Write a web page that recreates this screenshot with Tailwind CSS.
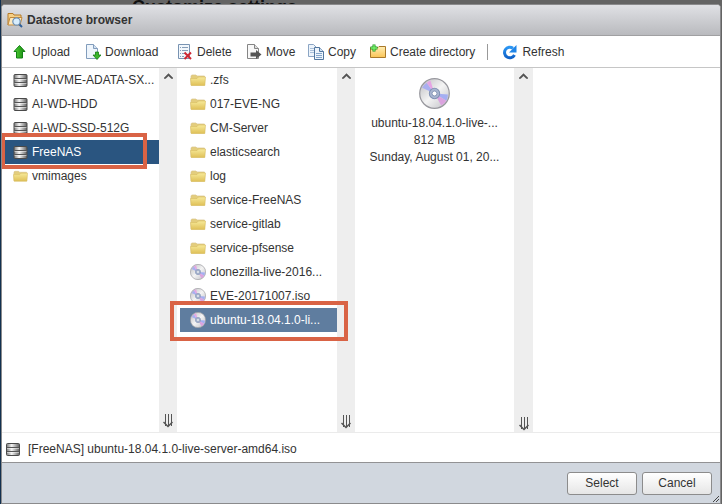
<!DOCTYPE html>
<html lang="en">
<head>
<meta charset="utf-8">
<title>Datastore browser</title>
<script src="https://cdn.jsdelivr.net/npm/@tailwindcss/browser@4"></script>
</head>
<body class="h-screen overflow-hidden bg-[#646464] font-['Liberation_Sans',Arial,sans-serif] text-[12px] leading-4 text-[#333]">
<svg class="absolute size-0" aria-hidden="true">
  <defs>
    <linearGradient id="metal"><stop offset="0" stop-color="#777"/><stop offset=".4" stop-color="#f4f4f4"/><stop offset="1" stop-color="#606060"/></linearGradient>
    <linearGradient id="yellow" x2="0" y2="1"><stop offset="0" stop-color="#f7ea9a"/><stop offset="1" stop-color="#dfc057"/></linearGradient>
    <linearGradient id="amber" x2="0" y2="1"><stop offset="0" stop-color="#ffeeb5"/><stop offset="1" stop-color="#fac456"/></linearGradient>
    <linearGradient id="green"><stop offset="0" stop-color="#55d63c"/><stop offset="1" stop-color="#15860d"/></linearGradient>
    <linearGradient id="silver" x2="1" y2="1"><stop offset="0" stop-color="#b9b9bd"/><stop offset=".5" stop-color="#f4f4f4"/><stop offset="1" stop-color="#bcbcc2"/></linearGradient>
    <linearGradient id="blue" x2="0" y2="1"><stop offset="0" stop-color="#2b96f3"/><stop offset="1" stop-color="#0f62c9"/></linearGradient>
  </defs>
  <symbol id="store" viewBox="0 0 14 13"><rect x=".5" y=".5" width="13" height="12" rx="1" fill="url(#metal)" stroke="#4a4a4a"/><path d="M1 4.500h12M1 8.500h12" stroke="#555"/><path d="M1 5.500h12M1 9.500h12" stroke="#fff" opacity=".5"/></symbol>
  <symbol id="folder" viewBox="0 0 16 12"><path d="M1 11V2.500Q1 1 2.200 1H6l1 1h7.500v9z" fill="#e3cd7d" stroke="#d8c48a" stroke-width=".7"/><path d="M.5 4.500H7L8.500 3H15.500L14.800 11.500H1.200z" fill="url(#yellow)" stroke="#d9bd62" stroke-width=".6"/></symbol>
  <symbol id="disc" viewBox="0 0 30 30"><circle cx="15" cy="15" r="14.300" fill="url(#silver)" stroke="#98989e" stroke-width="1.200"/><path d="M15 15 3 9.500A13 13 0 0 1 7.500 4.500z" fill="#aaaff0"/><path d="M15 15 7.500 4.500A13 13 0 0 1 11 2.500z" fill="#e6a4e4"/><path d="M15 15 28 16A13 13 0 0 1 26.500 22z" fill="#a4aef2"/><path d="M15 15 26.500 22A13 13 0 0 1 21.500 26.500z" fill="#dba3df"/><circle cx="15" cy="15" r="5" fill="#a9b6d0" stroke="#8192b4"/><circle cx="15" cy="15" r="2.400" fill="#fff" stroke="#7789ad" stroke-width=".8"/></symbol>
  <symbol id="up" viewBox="0 0 8 5"><path d="M0 4 4 0l4 4v1H6.500L4 2.500 1.500 5H0z" fill="#555"/></symbol>
  <symbol id="down" viewBox="0 0 10 14"><path d="M2.500 0v12M5.500 0v12M8.500 0v12" stroke="#555"/><path d="M.5 8 5 12.500 9.500 8" fill="none" stroke="#555" stroke-width="1.500"/></symbol>
</svg>

<div class="relative flex h-screen flex-col border-l border-[#12304f] pt-1 pr-px">
  <p class="absolute -top-[5px] left-[131px] text-[18px] leading-6 font-bold text-[#111]">Customize settings</p>
  <main class="relative flex min-h-0 flex-1 flex-col overflow-hidden rounded-t-[4px] border border-[#8a8a8c] bg-white">
    <header class="flex h-[31px] shrink-0 items-center gap-1 border-b border-[#a0a0a2] bg-linear-to-b from-[#e0e1e5] to-[#b9babe] pl-[5px]">
      <svg class="size-4" viewBox="0 0 16 16" aria-hidden="true"><path d="M1 13V1.500h5l1 1.500h7V6" fill="#f5cf86" stroke="#b57a29"/><path d="M1 13 3 5.500h12L13 13z" fill="#fde9bf" stroke="#c38a3b"/><path d="m12 12 3 3" stroke="#2f609b" stroke-width="2"/><circle cx="9.500" cy="9.500" r="3.700" fill="#d8edfc" stroke="#6e90b3" stroke-width="1.200"/></svg>
      <h1 class="font-bold">Datastore browser</h1>
    </header>

    <nav class="flex h-8 shrink-0 items-center border-b border-[#c6c6c6] pt-px pl-[10px]" aria-label="Datastore actions">
      <button class="flex w-[73px] items-center gap-1"><svg class="size-4" viewBox="0 0 16 16" aria-hidden="true"><path d="M7.500 1.500 13 7.500h-2.500v6.500h-6V7.500H2z" fill="url(#green)" stroke="#138016"/></svg>Upload</button>
      <button class="flex w-[92px] items-center gap-1"><svg class="size-4" viewBox="0 0 16 16" aria-hidden="true"><path d="M1.500 14.500V.5h7l4 4v10z" fill="#eef5fc" stroke="#829dbc"/><path d="M8.500.5v4h4" fill="#d3e2f2" stroke="#829dbc"/><path d="M10.500 8h3v3H16l-4 4.500L8 11h2.500z" fill="#3ab52b" stroke="#137c15" stroke-width=".8"/></svg>Download</button>
      <button class="flex w-[69px] items-center gap-1"><svg class="size-4" viewBox="0 0 16 16" aria-hidden="true"><path d="M1.500.5h11v14h-11z" fill="#f2f7fc" stroke="#7893b2"/><path d="M3 3.500h1m1 0h6m-8 3h1m1 0h6m-8 3h1m1 0h3m-5 3h1m1 0h2" stroke="#869db8"/><path d="m7.500 8.500 6.500 6.500m0-6.500L7.500 15" stroke="#cf2834" stroke-width="2"/></svg>Delete</button>
      <button class="flex w-[62px] items-center gap-1"><svg class="size-4" viewBox="0 0 16 16" aria-hidden="true"><path d="M1.500 14.500V.5h7l4 4v10z" fill="#f8f8f8" stroke="#858585"/><path d="M8.500.5v4h4" fill="#ddd" stroke="#858585"/><path d="M4.500 8.500H10V6l5.500 4.500L10 15v-2.500H4.500z" fill="#555"/></svg>Move</button>
      <button class="flex w-[62px] items-center gap-1"><svg class="size-4" viewBox="0 0 16 16" aria-hidden="true"><path d="M.5 12.500V.5h5l3.500 3.500v8.500z" fill="#edf4fb" stroke="#8ba5c4"/><path d="M2 4.500h4m-4 2h4m-4 2h4" stroke="#a9bfd9"/><path d="M6.500 15.500v-12h5l4 4v8z" fill="#edf4fb" stroke="#52779f"/><path d="M11.500 3.500v4h4" fill="#cfe0f1" stroke="#52779f"/><path d="M8 9.500h6m-6 2h6m-6 2h6" stroke="#84a5ca"/></svg>Copy</button>
      <button class="flex items-center gap-1"><svg class="size-4" viewBox="0 0 16 16" aria-hidden="true"><path d="M.5 13.500v-10H8l1-1h6.500v11z" fill="url(#amber)" stroke="#a9792a"/><path d="M4 .5v7M.5 4h7" stroke="#219223" stroke-width="3"/><path d="M4 1v6M1 4h6" stroke="#77f26c" stroke-width="1.400"/></svg>Create directory</button>
      <span class="mr-[14px] ml-3 h-4 w-px bg-[#999]"></span>
      <button class="flex items-center gap-1"><svg class="size-4" viewBox="0 0 16 16" aria-hidden="true"><path d="M12.500 11A5.300 5.300 0 1 1 11 4.200" fill="none" stroke="url(#blue)" stroke-width="3"/><path d="M14.500 1v7.500H7z" fill="#1f85e8"/></svg>Refresh</button>
    </nav>

    <section class="flex min-h-0 flex-1 border-b border-[#ebebeb]">
      <div class="relative flex w-[175px] shrink-0">
        <ul class="min-w-0 flex-1 pl-[3px] whitespace-nowrap *:flex *:h-6 *:items-center *:gap-1 *:pl-2">
          <li><svg class="h-[13px] w-[15px]"><use href="#store"/></svg>AI-NVME-ADATA-SX...</li>
          <li><svg class="h-[13px] w-[15px]"><use href="#store"/></svg>AI-WD-HDD</li>
          <li><svg class="h-[13px] w-[15px]"><use href="#store"/></svg>AI-WD-SSD-512G</li>
          <li class="bg-[#2a5580] text-white"><svg class="h-[13px] w-[15px]"><use href="#store"/></svg>FreeNAS</li>
          <li><svg class="h-3 w-[15px]"><use href="#folder"/></svg>vmimages</li>
        </ul>
        <div class="flex w-[18px] flex-col items-center justify-between bg-[#eee] pt-[5px] pb-1"><svg class="h-[6px] w-[9px]"><use href="#up"/></svg><svg class="h-[14px] w-[10px]"><use href="#down"/></svg></div>
        <div class="absolute top-[65px] -left-px h-9 w-[146px] border-4 border-[#d96345]"></div>
      </div>
      <div class="relative flex w-[178px] shrink-0">
        <ul class="min-w-0 flex-1 pl-[3px] whitespace-nowrap *:flex *:h-6 *:items-center *:gap-1 *:pl-[10px]">
          <li><svg class="h-3 w-4"><use href="#folder"/></svg>.zfs</li>
          <li><svg class="h-3 w-4"><use href="#folder"/></svg>017-EVE-NG</li>
          <li><svg class="h-3 w-4"><use href="#folder"/></svg>CM-Server</li>
          <li><svg class="h-3 w-4"><use href="#folder"/></svg>elasticsearch</li>
          <li><svg class="h-3 w-4"><use href="#folder"/></svg>log</li>
          <li><svg class="h-3 w-4"><use href="#folder"/></svg>service-FreeNAS</li>
          <li><svg class="h-3 w-4"><use href="#folder"/></svg>service-gitlab</li>
          <li><svg class="h-3 w-4"><use href="#folder"/></svg>service-pfsense</li>
          <li><svg class="size-4"><use href="#disc"/></svg>clonezilla-live-2016...</li>
          <li><svg class="size-4"><use href="#disc"/></svg>EVE-20171007.iso</li>
          <li class="bg-[#5f7d9f] text-white"><svg class="size-4"><use href="#disc"/></svg>ubuntu-18.04.1.0-li...</li>
        </ul>
        <div class="flex w-[18px] flex-col items-center justify-between bg-[#eee] pt-[5px] pb-[3px]"><svg class="h-[6px] w-[9px]"><use href="#up"/></svg><svg class="h-[14px] w-[10px]"><use href="#down"/></svg></div>
        <div class="absolute top-[233px] -left-[7px] h-10 w-[178px] border-4 border-[#d96345]"></div>
      </div>
      <div class="flex w-[178px] shrink-0">
        <div class="flex min-w-0 flex-1 flex-col items-center pt-[10px] leading-[17px] whitespace-nowrap">
          <svg class="mb-[6px] size-[31px]"><use href="#disc"/></svg>
          <p>ubuntu-18.04.1.0-live-...</p>
          <p>812 MB</p>
          <p>Sunday, August 01, 20...</p>
        </div>
        <div class="flex w-[19px] flex-col items-center justify-between bg-[#eee] pt-[5px] pb-px"><svg class="h-[6px] w-[9px]"><use href="#up"/></svg><svg class="h-[14px] w-[10px]"><use href="#down"/></svg></div>
      </div>
    </section>

    <p class="flex h-[30px] shrink-0 items-center gap-2 border-b border-[#929294] pt-[3px] pl-1"><svg class="h-[13px] w-[14px]"><use href="#store"/></svg>[FreeNAS] ubuntu-18.04.1.0-live-server-amd64.iso</p>

    <footer class="relative flex h-10 shrink-0 items-center justify-end gap-[5px] bg-[#d1d7df] pr-2">
      <button class="h-[23px] w-[70px] rounded-[3px] border border-[#8c8c8c] bg-linear-to-b from-white to-[#e6e6e6]">Select</button>
      <button class="h-[23px] w-[70px] rounded-[3px] border border-[#8c8c8c] bg-linear-to-b from-white to-[#e6e6e6]">Cancel</button>
      <svg class="absolute right-px bottom-px size-[6px]" viewBox="0 0 6 6" aria-hidden="true"><path d="M0 6 6 0M3 6l3-3" stroke="#444"/></svg>
    </footer>
  </main>
</div>
</body>
</html>
